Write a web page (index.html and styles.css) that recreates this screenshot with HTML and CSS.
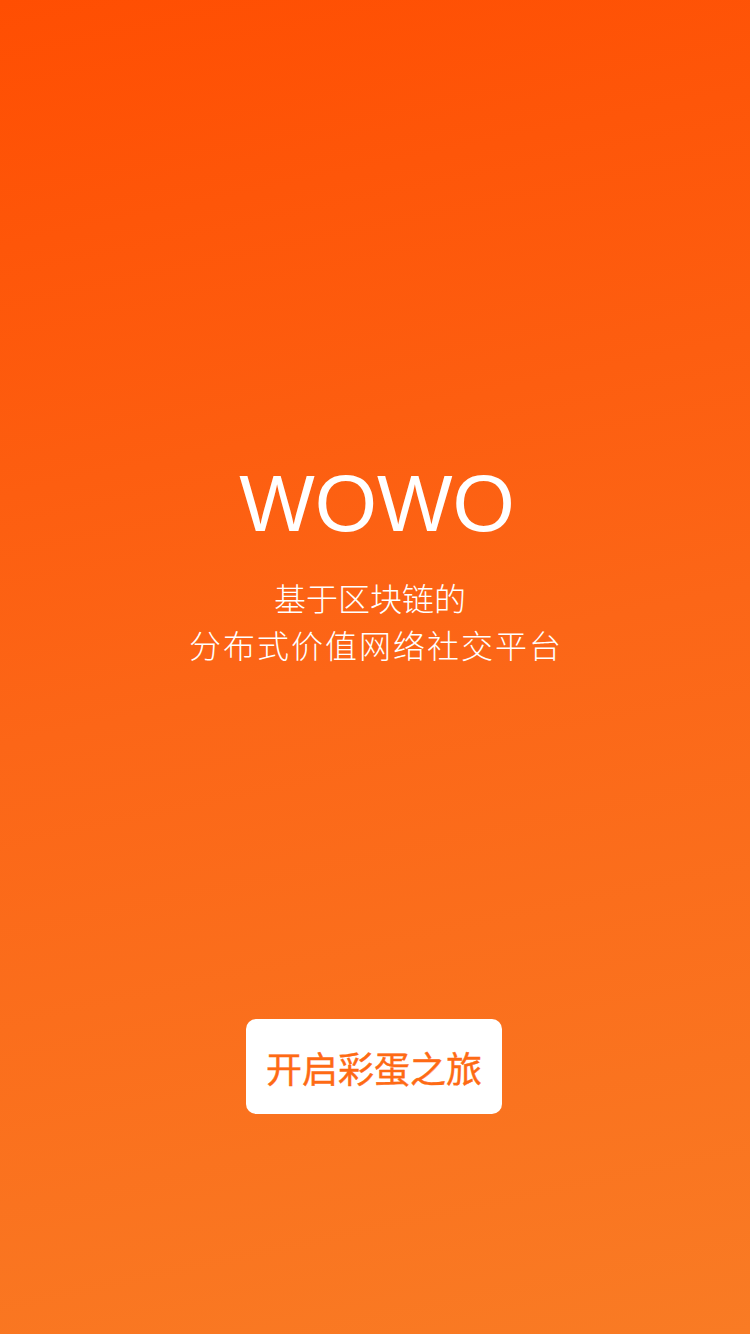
FILE: index.html
```html
<!DOCTYPE html>
<html lang="zh-CN">
<head>
<meta charset="utf-8">
<title>WOWO</title>
<link rel="stylesheet" href="styles.css">
</head>
<body>
<main class="screen">
  <h1 class="title">WOWO</h1>
  <p class="subtitle">
    <span class="line line-1">基于区块链的</span>
    <span class="line line-2">分布式价值网络社交平台</span>
  </p>
  <button class="start-btn" type="button">开启彩蛋之旅</button>
</main>
</body>
</html>
```

FILE: styles.css
```css
html, body {
  margin: 0;
  padding: 0;
}
body {
  width: 750px;
  height: 1334px;
  overflow: hidden;
  background: linear-gradient(168deg, #ff4e02 0%, #fc6617 50%, #f97b24 100%);
  font-family: "Noto Sans CJK SC", "Liberation Sans", sans-serif;
}
.screen {
  display: flex;
  flex-direction: column;
  align-items: center;
  padding-top: 464px;
}
.title {
  margin: 0 0 0 4px;
  font-family: "Liberation Sans", Arial, sans-serif;
  font-weight: 400;
  font-size: 80px;
  line-height: 80px;
  color: #ffffff;
}
.subtitle {
  margin: 30px 0 0;
  display: flex;
  flex-direction: column;
  align-items: center;
  color: #ffffff;
  font-size: 32px;
  line-height: 47px;
  font-weight: 300;
}
.line-1 {
  margin-right: 10px;
}
.line-2 {
  letter-spacing: 2px;
  margin-right: -2px;
}
.start-btn {
  margin-top: 351px;
  width: 256px;
  height: 95px;
  border: none;
  border-radius: 10px;
  background: #ffffff;
  color: #fe6a14;
  font-family: "Noto Sans CJK SC", sans-serif;
  font-size: 36px;
  font-weight: 400;
  padding: 0;
  margin-left: -2px;
  -webkit-text-stroke: 0.4px #fe6a14;
}
```
